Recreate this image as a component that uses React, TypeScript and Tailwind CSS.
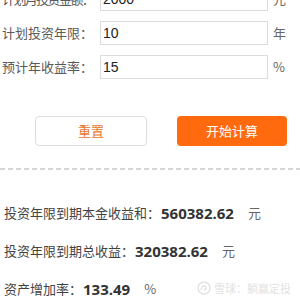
import React from 'react';

const ROWS = [
  { label: '计划月投资金额：', value: '2000', unit: '元', tight: true },
  { label: '计划投资年限：', value: '10', unit: '年', tight: false },
  { label: '预计年收益率：', value: '15', unit: '%', tight: false },
];

const RESULTS = [
  { label: '投资年限到期本金收益和：', value: '560382.62', unit: '元' },
  { label: '投资年限到期总收益：', value: '320382.62', unit: '元' },
  { label: '资产增加率：', value: '133.49', unit: '%' },
];

export default function App() {
  return (
    <div className="relative w-[300px] h-[300px] overflow-hidden bg-white font-['Noto_Sans_CJK_SC',sans-serif]">
      {/* form rows, first one scrolled partly out of view */}
      <div className="mt-[-13px] flex flex-col gap-[10px]">
        {ROWS.map((row) => (
          <div key={row.label} className="flex items-center h-[24px]">
            <span
              className={`w-[100px] shrink-0 pl-[2px] text-[13px] text-[#5a5a5a] whitespace-nowrap ${row.tight ? 'tracking-[-1.6px]' : ''}`}
            >
              {row.label}
            </span>
            <div className="w-[168px] h-[24px] border border-[#dcdcdc] flex items-center pl-[2px] text-[14px] text-[#222] font-['Liberation_Sans',sans-serif]">
              {row.value}
            </div>
            <span className="ml-[5px] text-[13px] text-[#666]">{row.unit}</span>
          </div>
        ))}
      </div>

      {/* buttons */}
      <div className="mt-[37px] flex pl-[35px] gap-[30px]">
        <button className="w-[112px] h-[30px] rounded-[4px] border border-[#dddddd] bg-white text-[13px] text-[#e8762e]">
          重置
        </button>
        <button className="w-[110px] h-[30px] rounded-[4px] bg-[#ff6a0e] text-[13px] text-white">
          开始计算
        </button>
      </div>

      <div className="mt-[22px] h-[2px] w-full bg-[linear-gradient(to_right,#d6d6d6_5px,transparent_5px)] bg-[length:8px_2px]" />

      {/* results */}
      <div className="mt-[24px] flex flex-col">
        {RESULTS.map((r) => (
          <div key={r.label} className="h-[38px] flex items-center pl-[4px] text-[13px] text-[#444] whitespace-nowrap">
            <span>{r.label}</span>
            <span className="ml-[1px] mr-[14px] font-bold text-[15px] text-[#333] font-['Open_Sans',sans-serif]">
              {r.value}
            </span>
            <span className="text-[#666]">{r.unit}</span>
          </div>
        ))}
      </div>

      {/* watermark */}
      <div className="absolute right-[9px] bottom-[4px] flex items-center gap-[3px] text-[11px] text-[#e2e2e2]">
        <svg width="14" height="14" viewBox="0 0 14 14" fill="none" stroke="#e2e2e2" strokeWidth="1.4">
          <circle cx="7" cy="7" r="6" />
          <path d="M4 9c0-3 2-4 3-4s2 1 2 2-1 2-2 2" />
        </svg>
        <span>雪球：躺赢定投</span>
      </div>
    </div>
  );
}
